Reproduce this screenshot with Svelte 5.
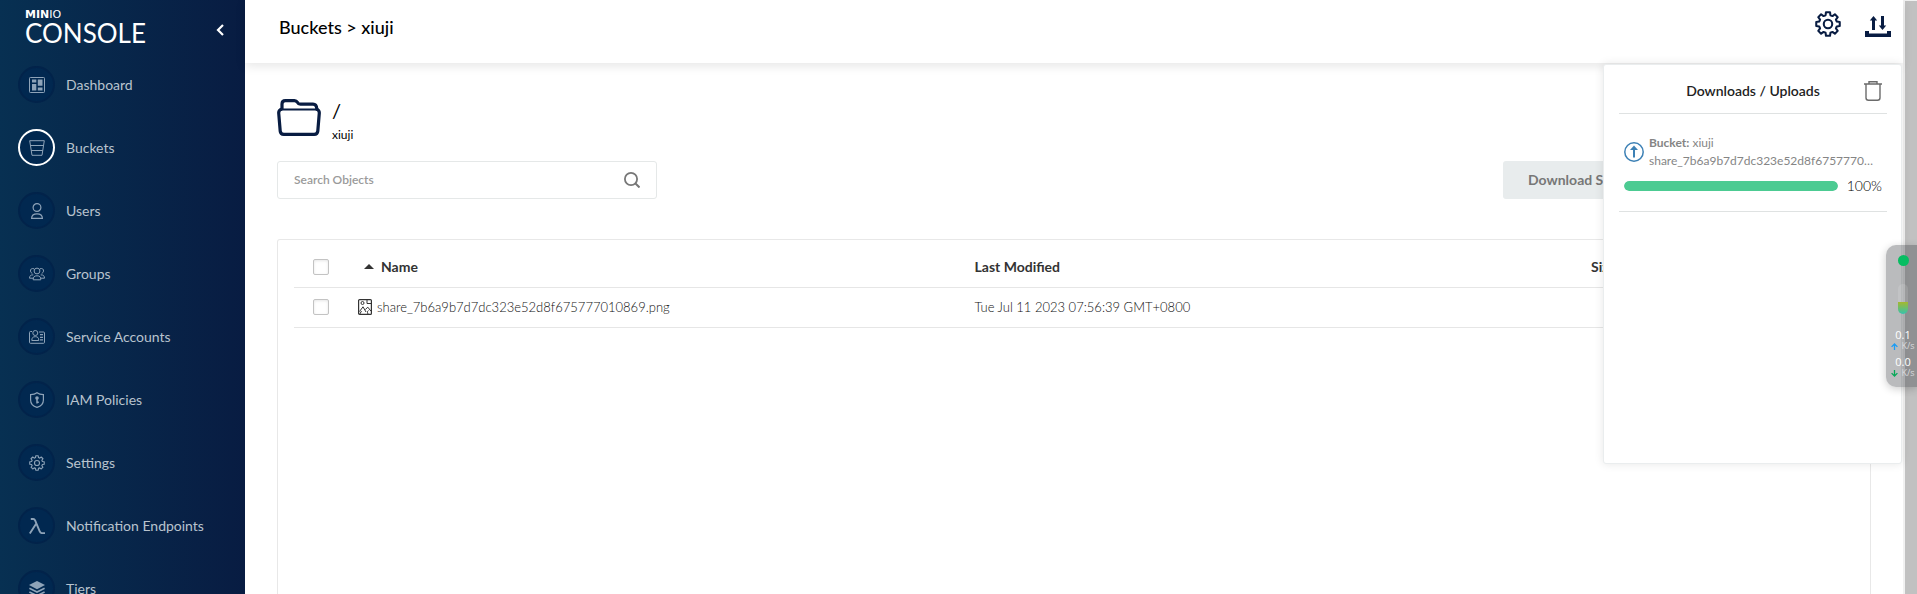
<script>
  let activeItem = $state('Buckets');
  let search = $state('');

  const menu = [
    { label: 'Dashboard', icon: 'dashboard' },
    { label: 'Buckets', icon: 'bucket' },
    { label: 'Users', icon: 'user' },
    { label: 'Groups', icon: 'group' },
    { label: 'Service Accounts', icon: 'account' },
    { label: 'IAM Policies', icon: 'shield' },
    { label: 'Settings', icon: 'gear' },
    { label: 'Notification Endpoints', icon: 'lambda' },
    { label: 'Tiers', icon: 'tiers' },
  ];

  const objects = [
    {
      name: 'share_7b6a9b7d7dc323e52d8f675777010869.png',
      modified: 'Tue Jul 11 2023 07:56:39 GMT+0800',
    },
  ];

  const transfers = [
    { bucket: 'xiuji', name: 'share_7b6a9b7d7dc323e52d8f675777010869.png', percent: 100 },
  ];

  const speeds = [
    { value: '0.1', up: true },
    { value: '0.0', up: false },
  ];

  // eight teeth: two points on the rim, two in the valley
  function gearPath() {
    const points = [];
    for (let i = 0; i < 8; i++) {
      const mid = (i * Math.PI) / 4;
      for (const [offset, r] of [[-0.27, 8.4], [-0.17, 11], [0.17, 11], [0.27, 8.4]]) {
        const x = 12 + r * Math.sin(mid + offset);
        const y = 12 - r * Math.cos(mid + offset);
        points.push(`${x.toFixed(2)} ${y.toFixed(2)}`);
      }
    }
    return `M${points.join('L')}Z`;
  }
  const gear = gearPath();
</script>

{#snippet menuIcon(name)}
  <svg class="menu-icon" viewBox="0 0 16 16" fill="none" stroke="currentColor" aria-hidden="true">
    {#if name === 'dashboard'}
      <rect x="0.5" y="0.5" width="15" height="15" rx="0.8" />
      <path fill="currentColor" stroke="none" d="M3 2.5h4.3v3H3zM8.8 2.5h4.7v6.3H8.8zM3 7h4.3v6.5H3zM8.8 10.4h4.7v3H8.8z" />
    {:else if name === 'bucket'}
      <path d="M0.7 0.7h14.6l-2.3 14.6H3zM1.5 5.5h13M2.2 10.5h11.6" />
    {:else if name === 'user'}
      <circle cx="8" cy="4.5" r="3.9" stroke-width="1.2" />
      <path stroke-width="1.2" d="M2.6 15.4c0-3 1.8-4.6 5.4-4.6s5.4 1.6 5.4 4.6z" />
    {:else if name === 'group'}
      <circle cx="8" cy="5" r="2.9" />
      <path d="M4.2 13.8c0-2.9 1-4 3.8-4s3.8 1.1 3.8 4zM5 2.8C2.6 1.9 1.3 3.3 1.5 5c.1 1.3.8 2 1.8 2.3M11 2.8c2.4-.9 3.7.5 3.5 2.2-.1 1.3-.8 2-1.8 2.3M4.3 8.9C1.6 8.7.6 9.9.5 12.2h3.5M11.7 8.9c2.7-.2 3.7 1 3.8 3.3H12" />
    {:else if name === 'account'}
      <path d="M3 2.5H1.5q-1 0-1 1v9.8q0 1 1 1h13q1 0 1-1V4q0-1-1-1H10" />
      <circle cx="6.3" cy="4" r="2.5" />
      <path d="M2.8 11.5c0-2.7 1-3.8 3.5-3.8s3.5 1.1 3.5 3.8z" />
      <path stroke-width="1.3" d="M11 5.7h3M11 8.3h3M11 10.9h3" />
    {:else if name === 'shield'}
      <path stroke-width="1.2" d="M8 .7c1.9 1.5 4 1.9 6.4 1.9v5.3c0 4-2.8 6.4-6.4 7.5-3.6-1.1-6.4-3.5-6.4-7.5V2.6C4 2.6 6.1 2.2 8 .7z" />
      <circle cx="8" cy="6" r="1.8" fill="currentColor" stroke="none" />
      <path stroke-width="1.5" d="M8 6v5.5M8 10.3h1.8" />
    {:else if name === 'gear'}
      <g transform="scale(0.666)" stroke-width="1.7" stroke-linejoin="round">
        <path d={gear} />
        <circle cx="12" cy="12" r="3.8" />
      </g>
    {:else if name === 'lambda'}
      <path stroke-width="1.9" d="M1.8 1h2.4q1.3 0 1.9 1.4l4.5 10.8q.8 1.9 2.3 1.9H16M7.3 5.5.8 15.5" />
    {:else}
      <path fill="currentColor" stroke="none" d="M8 0l8 4-8 4.2L0 4z" />
      <path stroke-width="1.7" d="M.4 7.2 8 11l7.6-3.8M.4 10.9 8 14.7l7.6-3.8" />
    {/if}
  </svg>
{/snippet}

<div class="console">
  <aside class="sidebar">
    <div class="brand">
      <div class="logo">
        <div class="logo-top"><b>MIN</b><span>IO</span></div>
        <div class="logo-name">CONSOLE</div>
      </div>
      <button class="icon-button collapse" aria-label="Collapse menu">
        <svg width="8" height="12" viewBox="0 0 8 12" fill="none" stroke="#fff" stroke-width="2.2">
          <path d="M7 1 2 6l5 5" />
        </svg>
      </button>
    </div>
    <nav>
      {#each menu as item}
        <a
          href="#{item.icon}"
          class="menu-item"
          class:active={item.label === activeItem}
          onclick={() => (activeItem = item.label)}
        >
          <span class="menu-circle">{@render menuIcon(item.icon)}</span>
          {item.label}
        </a>
      {/each}
    </nav>
  </aside>

  <div class="page">
    <header class="page-header">
      <h1>Buckets &gt; xiuji</h1>
      <div class="header-actions">
        <button class="icon-button" aria-label="Configure bucket">
          <svg width="26" height="26" viewBox="0 0 24 24" fill="none" stroke="#081c42" stroke-width="1.9" stroke-linejoin="round">
            <path d={gear} />
            <circle cx="12" cy="12" r="3.9" />
          </svg>
        </button>
        <button class="icon-button" aria-label="Downloads and uploads">
          <svg width="26" height="26" viewBox="0 0 26 26" fill="#081c42">
            <path d="M0 20h4v2.5h18V20h4v6H0zM8.5 5l3.7 4.5H10V19H7V9.5H4.8zM17.5 19l3.7-4.500H19V5h-3v9.500h-2.200z" />
          </svg>
        </button>
      </div>
    </header>

    <main class="content">
      <div class="folder">
        <svg width="44" height="37" viewBox="0 0 44 37" fill="none" stroke="#081c42" stroke-linejoin="round">
          <path stroke-width="3.2" d="M5 10V5q0-3.4 3.4-3.4h9q2 0 3 1.8.9 1.8 3 1.8H36q3.5 0 3.8 4.8" />
          <path stroke-width="3.2" d="M5 10q-3.5 1-3.3 4l1.5 18q.3 3.3 3.6 3.3h30.4q3.3 0 3.6-3.3l1.5-18q.2-3-3.3-4" />
          <path stroke-width="2" d="M3 10.5h38" />
        </svg>
        <div class="folder-text">
          <span class="folder-path">/</span>
          <a href="#xiuji">xiuji</a>
        </div>
      </div>

      <div class="toolbar">
        <label class="search">
          <input type="text" placeholder="Search Objects" aria-label="Search Objects" bind:value={search} />
          <svg width="16" height="16" viewBox="0 0 16 16" fill="none" stroke="#777" stroke-width="1.8">
            <circle cx="7" cy="7" r="6.1" />
            <path stroke-width="2" d="m11.5 11.5 4 4" />
          </svg>
        </label>
        <div class="actions">
          <button class="download" disabled>Download Selected</button>
        </div>
      </div>

      <div class="table-box">
        <table>
          <colgroup>
            <col class="col-check" />
            <col />
            <col />
            <col class="col-size" />
          </colgroup>
          <thead>
            <tr>
              <th class="check"><input type="checkbox" aria-label="Select all" /></th>
              <th><span class="sort"></span>Name</th>
              <th>Last Modified</th>
              <th>Size</th>
            </tr>
          </thead>
          <tbody>
            {#each objects as object}
              <tr>
                <td class="check"><input type="checkbox" aria-label="Select {object.name}" /></td>
                <td>
                  <span class="file">
                    <svg width="14" height="16" viewBox="0 0 14 16" fill="none" stroke="#333">
                      <rect x="0.6" y="0.6" width="12.8" height="14.8" rx="1" stroke-width="1.2" />
                      <path d="M9 .8v3.7h4.2" />
                      <circle cx="4.5" cy="4" r="1.5" />
                      <path d="M1.5 12.5 5 7.8l3 5.2M1.8 15l1.7-3M7.3 10.5l2.5-2.3 3.2 4M10 15c-1-2-.5-3 .5-3.5" />
                    </svg>
                    {object.name}
                  </span>
                </td>
                <td>{object.modified}</td>
                <td></td>
              </tr>
            {/each}
          </tbody>
        </table>
      </div>
    </main>

    <section class="transfers">
      <div class="transfers-head">
        <h2>Downloads / Uploads</h2>
        <button class="icon-button" aria-label="Clear completed">
          <svg width="18" height="20" viewBox="0 0 18 20" fill="none" stroke="#6b6b6b" stroke-width="1.4">
            <path d="M0 3h18M5 2.5V.8h8v1.7M2 3.5v13.2q0 2.5 2.5 2.5h9q2.5 0 2.5-2.5V3.5" />
          </svg>
        </button>
      </div>
      {#each transfers as transfer}
        <div class="transfer">
          <div class="transfer-info">
            <svg width="20" height="20" viewBox="0 0 20 20" fill="none" stroke="#3d81b5">
              <circle cx="10" cy="10" r="9.2" stroke-width="1.5" />
              <path stroke-width="2" d="M10 15.5V6" />
              <path fill="#3d81b5" stroke="none" d="m10 3.5 4 4.5H6z" />
            </svg>
            <div class="transfer-text">
              <div><b>Bucket:</b> {transfer.bucket}</div>
              <div class="transfer-name">{transfer.name}</div>
            </div>
          </div>
          <div class="transfer-progress">
            <div class="bar"><div class="bar-fill" style="width: {transfer.percent}%"></div></div>
            <span>{transfer.percent}%</span>
          </div>
        </div>
      {/each}
    </section>
  </div>

  <div class="scroll-track"><div class="scroll-thumb"></div></div>

  <div class="monitor">
    <span class="monitor-dot"></span>
    <span class="monitor-gauge"></span>
    <div class="monitor-speeds">
      {#each speeds as speed}
        <div class="speed">
          <span>{speed.value}</span>
          <span class="speed-unit">
            <svg class:down={!speed.up} width="7" height="7" viewBox="0 0 7 7" fill="none" stroke={speed.up ? '#1a9cf5' : '#06a858'} stroke-width="1.3">
              <path d="M3.5 7V1M.6 3.9l2.9-2.9 2.9 2.9" />
            </svg>
            K/s
          </span>
        </div>
      {/each}
    </div>
  </div>
</div>

<style>
  :global(body) {
    margin: 0;
    font-family: Lato, sans-serif;
    color: #000;
    background: #fff;
  }
  .console {
    position: relative;
    display: flex;
    height: 100vh;
    overflow: hidden;
  }
  .icon-button {
    display: flex;
    padding: 0;
    border: 0;
    background: none;
    cursor: pointer;
  }

  /* sidebar */
  .sidebar {
    flex: 0 0 245px;
    box-sizing: border-box;
    overflow: hidden;
    background: linear-gradient(90deg, #073052 0%, #081c42 100%);
  }
  .brand {
    display: flex;
    justify-content: space-between;
    height: 66px;
    box-sizing: border-box;
    padding: 8px 21px 0 25px;
  }
  .logo {
    color: #fff;
  }
  .logo-top {
    display: flex;
    font: 11px/14px 'DejaVu Sans', sans-serif;
  }
  .logo-name {
    font-size: 26px;
    line-height: 22px;
  }
  .collapse {
    align-self: flex-start;
    margin-top: 16px;
  }
  .menu-item {
    display: flex;
    align-items: center;
    gap: 11px;
    height: 37px;
    margin-bottom: 26px;
    padding-left: 18px;
    font-size: 14px;
    color: #b8c3ce;
    text-decoration: none;
  }
  .menu-circle {
    display: flex;
    align-items: center;
    justify-content: center;
    width: 37px;
    height: 37px;
    box-sizing: border-box;
    border: 2px solid #02234a;
    border-radius: 50%;
    background: #012850;
    color: #8ea3b8;
  }
  .menu-item.active .menu-circle {
    border-color: #fff;
  }
  .menu-icon {
    width: 16px;
    height: 16px;
  }

  /* page */
  .page {
    position: relative;
    flex: 1;
    min-width: 0;
    display: flex;
    flex-direction: column;
  }
  .page-header {
    display: flex;
    justify-content: space-between;
    flex: 0 0 63px;
    box-sizing: border-box;
    padding: 11px 12px 0 34px;
    box-shadow: 0 3px 10px rgba(0, 0, 0, 0.1);
  }
  h1 {
    margin: 5px 0 0;
    font-size: 18px;
    line-height: 22px;
    font-weight: 500;
  }
  .header-actions {
    display: flex;
    align-items: flex-start;
    gap: 24px;
  }
  .content {
    display: flex;
    flex-direction: column;
    flex: 1;
    min-height: 0;
    padding: 36px 32px 0;
  }
  .folder {
    display: flex;
    gap: 11px;
    height: 62px;
  }
  .folder-text {
    display: flex;
    flex-direction: column;
  }
  .folder-path {
    font-size: 20px;
    line-height: 22px;
  }
  .folder-text a {
    font-size: 12px;
    line-height: 28px;
    color: #000;
    text-decoration: none;
  }
  .toolbar {
    display: flex;
    justify-content: space-between;
    height: 38px;
    margin-bottom: 40px;
  }
  .search {
    display: flex;
    align-items: center;
    width: 380px;
    box-sizing: border-box;
    padding: 0 16px;
    border: 1px solid #e5e8e8;
    border-radius: 3px;
  }
  .search input {
    flex: 1;
    min-width: 0;
    padding: 0 0 2px;
    border: 0;
    outline: 0;
    font: 600 12px Lato, sans-serif;
    color: #333;
  }
  .search input::placeholder {
    color: #9a9a9a;
    opacity: 1;
  }
  .actions {
    display: flex;
    width: 368px;
  }
  .download {
    padding: 0 25px 2px;
    border: 0;
    border-radius: 3px;
    font: 700 14px Lato, sans-serif;
    color: #777;
    background: #e8eced;
  }
  .table-box {
    flex: 1;
    min-height: 0;
    padding: 8px 16px 0;
    border: 1px solid #e8e8e8;
    border-bottom: 0;
    border-radius: 3px 3px 0 0;
  }
  table {
    width: 100%;
    border-collapse: collapse;
    table-layout: fixed;
  }
  .col-check {
    width: 64px;
  }
  .col-size {
    width: 263px;
  }
  th,
  td {
    height: 37px;
    padding: 0 0 2px;
    border-bottom: 1px solid #e6e6e6;
    text-align: left;
  }
  th {
    font-size: 14px;
    font-weight: 700;
    color: #333;
  }
  td {
    font-size: 13px;
    font-weight: 300;
    color: #111;
  }
  .check input {
    appearance: none;
    display: block;
    width: 16px;
    height: 16px;
    margin: 0 0 0 19px;
    border: 1px solid #c3c3c3;
    border-radius: 2px;
    background: #fff;
    box-shadow: inset 0 1px 3px rgba(0, 0, 0, 0.1);
  }
  .sort {
    display: inline-block;
    margin: 0 7px 3px 6px;
    border: 5px solid transparent;
    border-top: 0;
    border-bottom-color: #333;
  }
  .file {
    display: flex;
    align-items: center;
    gap: 5px;
  }

  /* downloads and uploads */
  .transfers {
    position: absolute;
    top: 64px;
    right: 1px;
    width: 299px;
    height: 400px;
    box-sizing: border-box;
    padding: 0 14px 0 15px;
    border: 1px solid #eaedee;
    border-radius: 3px;
    background: #fff;
    box-shadow: 0 0 10px rgba(0, 0, 0, 0.1);
  }
  .transfers-head {
    display: flex;
    align-items: center;
    height: 49px;
    box-sizing: border-box;
    padding: 4px 5px 0 23px;
    border-bottom: 1px solid #dfe2e2;
  }
  h2 {
    flex: 1;
    margin: 0;
    font-size: 14px;
    line-height: 20px;
    font-weight: 600;
    text-align: center;
    color: #222;
  }
  .transfer {
    padding: 20px 5px 15px;
    border-bottom: 1px solid #dfe2e2;
  }
  .transfer-info {
    display: flex;
    align-items: center;
    gap: 5px;
    font-size: 12px;
    line-height: 18px;
    color: #858585;
  }
  .transfer-info svg {
    flex: none;
  }
  .transfer-text {
    min-width: 0;
    padding-right: 4px;
  }
  .transfer-name {
    overflow: hidden;
    white-space: nowrap;
    text-overflow: ellipsis;
  }
  .transfer-progress {
    display: flex;
    align-items: center;
    gap: 9px;
    margin-top: 6px;
    font-size: 14px;
    line-height: 20px;
    font-weight: 300;
  }
  .bar {
    flex: 1;
    height: 10px;
    border-radius: 5px;
    overflow: hidden;
    background: #e8eced;
  }
  .bar-fill {
    height: 100%;
    border-radius: 5px;
    background: #4ccb92;
  }

  .scroll-track {
    flex: 0 0 14px;
    box-sizing: border-box;
    padding: 1px 0 0 2px;
    background: #f1f1f1;
  }
  .scroll-thumb {
    height: 100%;
    background: #c1c1c1;
  }

  /* floating system monitor */
  .monitor {
    position: absolute;
    top: 245px;
    right: 0;
    display: flex;
    flex-direction: column;
    align-items: center;
    width: 31px;
    height: 142px;
    box-sizing: border-box;
    padding: 10px 0 0 3px;
    border-radius: 10px 0 0 10px;
    background: rgba(40, 42, 50, 0.32);
    box-shadow: 0 2px 8px rgba(0, 0, 0, 0.2);
    color: #fff;
  }
  .monitor-dot {
    width: 11px;
    height: 11px;
    margin-bottom: 18px;
    border-radius: 50%;
    background: #07bd62;
  }
  .monitor-gauge {
    width: 10px;
    height: 30px;
    margin-bottom: 14px;
    border-radius: 5px;
    background: linear-gradient(rgba(255, 255, 255, 0.12) 60%, #a5b82e 60%, #35c3ad 100%);
  }
  .monitor-speeds {
    display: flex;
    flex-direction: column;
    gap: 4px;
  }
  .speed {
    display: flex;
    flex-direction: column;
    align-items: center;
    font: 11px/13px 'Open Sans', sans-serif;
  }
  .speed-unit {
    display: flex;
    align-items: center;
    gap: 3px;
    font-size: 9px;
    line-height: 10px;
    color: #d9dadc;
  }
  .down {
    transform: rotate(180deg);
  }
</style>
